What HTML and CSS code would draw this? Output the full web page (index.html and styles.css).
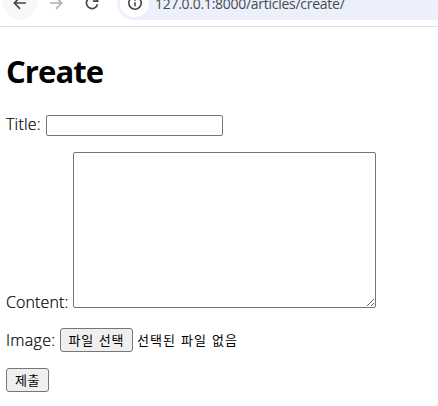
FILE: index.html
```html
<!DOCTYPE html>
<html lang="ko">
<head>
<meta charset="utf-8">
<title>Create</title>
<link rel="stylesheet" href="styles.css">
</head>
<body>
<header class="browser">
  <div class="toolbar">
    <span class="nav back"><svg width="20" height="20" viewBox="0 0 20 20"><path d="M16 10H4.8M10 4.2 4.4 10l5.6 5.8"/></svg></span>
    <span class="nav forward"><svg width="20" height="20" viewBox="0 0 20 20"><path d="M4 10h11.2M10 4.2l5.6 5.8-5.6 5.8"/></svg></span>
    <span class="nav reload"><svg width="20" height="20" viewBox="0 0 20 20"><path d="M15.5 11.2A5.6 5.6 0 1 1 14.2 6.2L15.6 7.8M15.6 3.5v4.7h-4.7"/></svg></span>
    <div class="address">
      <span class="info"><svg width="18" height="18" viewBox="0 0 18 18"><circle cx="9" cy="9" r="6.2"/><path d="M9 8.3v4M9 5.2v1.6"/></svg></span>
      <span class="url">127.0.0.1:8000/articles/create/</span>
    </div>
  </div>
</header>
<main class="page">
  <h1 class="heading">Create</h1>
  <form class="form">
    <div class="row title-row"><label class="label title-label" for="title">Title:</label><input class="text-input" id="title" type="text"></div>
    <div class="row content-row"><label class="label content-label" for="content">Content:</label><textarea class="text-area" id="content"></textarea></div>
    <div class="row image-row"><span class="label image-label">Image:</span><button class="button file-button" type="button">파일 선택</button><span class="file-name">선택된 파일 없음</span></div>
    <button class="button submit" type="button">제출</button>
  </form>
</main>
</body>
</html>
```
FILE: styles.css
```css
* { box-sizing: border-box; }
body {
  margin: 0;
  background: #fff;
  color: #000;
  font: 16px/22px "Open Sans", "Noto Sans CJK KR", sans-serif;
  overflow: hidden;
}
.browser {
  height: 27px;
  overflow: hidden;
  border-bottom: 1px solid #dedfe0;
}
.toolbar {
  display: flex;
  height: 34px;
  margin-top: -14px;
  padding-left: 3px;
}
.nav {
  display: flex;
  flex: none;
  align-items: center;
  justify-content: center;
  width: 34px;
  height: 34px;
  margin-right: 2px;
  border-radius: 50%;
}
.nav svg, .info svg {
  fill: none;
  stroke: #444649;
  stroke-width: 1.7;
}
.back { background: #f8f8f8; }
.forward svg { stroke: #b0b1b3; }
.reload { margin-right: 8px; }
.address {
  display: flex;
  flex: 1;
  align-items: center;
  padding-left: 3px;
  border-radius: 17px 0 0 17px;
  background: #ebf0fa;
}
.info {
  display: flex;
  align-items: center;
  justify-content: center;
  width: 29px;
  height: 28px;
  border-radius: 50%;
  background: #fff;
}
.info svg { stroke-width: 1.6; }
.url {
  margin: 1px 0 0 6px;
  color: #484b50;
  font-size: 14px;
  line-height: 20px;
  letter-spacing: -0.27px;
}
.page { padding: 22px 6px 0; }
.heading {
  height: 44px;
  margin: 0 0 22px;
  font-size: 31px;
  font-weight: 700;
  line-height: 44px;
  letter-spacing: -0.9px;
}
.row { display: flex; }
.label {
  white-space: nowrap;
  font-weight: 300;
  letter-spacing: 0.1px;
  -webkit-text-stroke: 0.2px #000;
}
.title-row { height: 21px; margin-bottom: 16px; }
.title-label { width: 40px; line-height: 19px; letter-spacing: 0.2px; }
.content-row { align-items: flex-end; height: 156px; margin-bottom: 20px; }
.content-label { width: 67px; margin-bottom: -5px; }
.image-row { height: 24px; margin-bottom: 16px; }
.image-label { width: 54px; line-height: 25px; letter-spacing: 0.3px; }
.text-input, .text-area {
  margin: 0;
  border: 1px solid #767676;
  border-radius: 2px;
  background: #fff;
}
.text-input { width: 177px; height: 21px; }
.text-area { width: 303px; height: 156px; }
.button {
  height: 24px;
  margin: 0;
  padding: 0;
  border: 1px solid #767676;
  border-radius: 3px;
  background: #efefef;
  color: #000;
  font: 400 13px/20px "Noto Sans CJK KR", sans-serif;
}
.file-button { width: 73px; letter-spacing: 0.9px; word-spacing: 0; }
.submit { display: block; width: 43px; letter-spacing: 0.5px; }
.file-name {
  margin-left: 4px;
  font: 400 13px/24px "Noto Sans CJK KR", sans-serif;
  letter-spacing: 1px;
  word-spacing: 0.5px;
}
```
